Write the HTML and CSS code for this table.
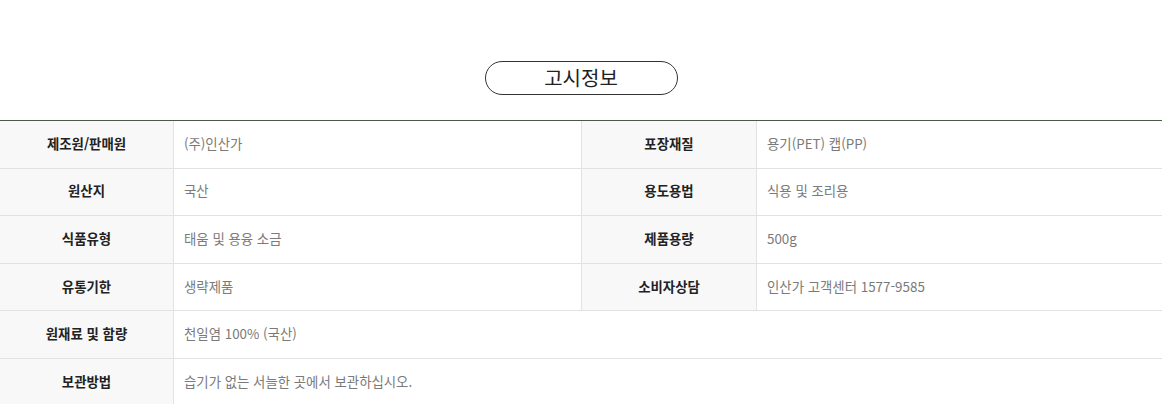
FILE: index.html
```html
<!DOCTYPE html>
<html lang="ko">
<head>
<meta charset="utf-8">
<title>고시정보</title>
<link rel="stylesheet" href="styles.css">
</head>
<body>
<section class="notice">
  <div class="title-wrap"><h2 class="title">고시정보</h2></div>
  <div class="info">
    <div class="row">
      <div class="th">제조원/판매원</div><div class="td">(주)인산가</div>
      <div class="th">포장재질</div><div class="td">용기(PET) 캡(PP)</div>
    </div>
    <div class="row">
      <div class="th">원산지</div><div class="td">국산</div>
      <div class="th">용도용법</div><div class="td">식용 및 조리용</div>
    </div>
    <div class="row">
      <div class="th">식품유형</div><div class="td">태움 및 용융 소금</div>
      <div class="th">제품용량</div><div class="td">500g</div>
    </div>
    <div class="row">
      <div class="th">유통기한</div><div class="td">생략제품</div>
      <div class="th">소비자상담</div><div class="td">인산가 고객센터 1577-9585</div>
    </div>
    <div class="row wide">
      <div class="th">원재료 및 함량</div><div class="td">천일염 100% (국산)</div>
    </div>
    <div class="row wide">
      <div class="th">보관방법</div><div class="td">습기가 없는 서늘한 곳에서 보관하십시오.</div>
    </div>
  </div>
</section>
</body>
</html>
```

FILE: styles.css
```css
html, body {
  margin: 0;
  padding: 0;
  background: #fff;
}
body {
  font-family: "Noto Sans CJK KR", "Open Sans", sans-serif;
  font-size: 13.4px;
}
.title-wrap {
  display: flex;
  justify-content: center;
  padding-top: 61px;
  padding-bottom: 25px;
}
.title {
  margin: 0;
  box-sizing: border-box;
  width: 193px;
  height: 34px;
  border: 1px solid #333;
  border-radius: 17px;
  display: flex;
  align-items: center;
  justify-content: center;
  padding-bottom: 2px;
  font-size: 20px;
  font-weight: 400;
  color: #222;
}
.info {
  border-top: 1px solid #4a5a48;
}
.row {
  display: grid;
  grid-template-columns: 174px 408px 175px 1fr;
  height: 47.6px;
  box-sizing: border-box;
  border-bottom: 1px solid #e2e2e2;
}
.row.wide {
  grid-template-columns: 174px 1fr;
}
.th, .td {
  display: flex;
  align-items: center;
  box-sizing: border-box;
  padding-bottom: 3px;
}
.th {
  justify-content: center;
  background: #f8f8f8;
  font-weight: 700;
  color: #222;
  border-right: 1px solid #e2e2e2;
}
.td {
  padding-left: 10px;
  color: #7a7a7a;
  border-right: 1px solid #e2e2e2;
}
.td:last-child {
  border-right: none;
}
```
